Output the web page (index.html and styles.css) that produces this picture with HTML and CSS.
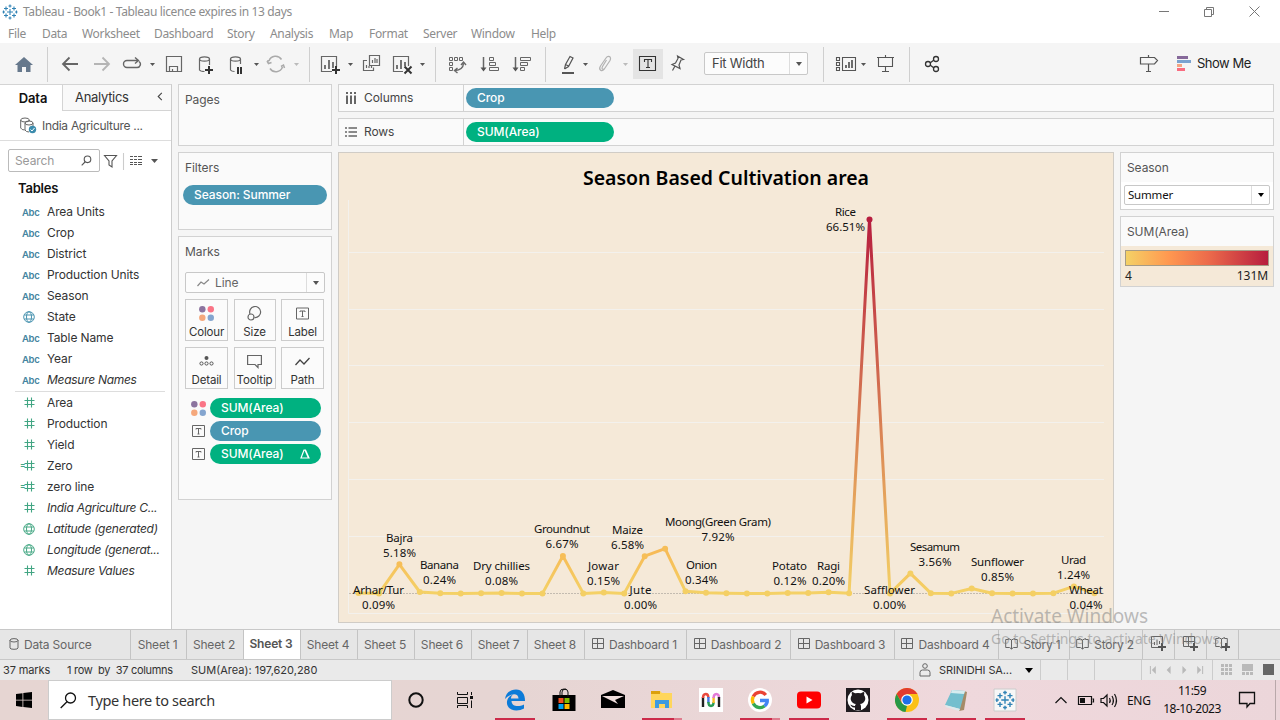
FILE: index.html
```html
<!DOCTYPE html>
<html lang="en">
<head>
<meta charset="utf-8">
<title>Tableau - Book1</title>
<link rel="stylesheet" href="styles.css">
</head>
<body>
<svg class="defs" width="0" height="0">
  <symbol id="logo" viewBox="0 0 16 16"><path d="M8 5v6M5 8h6M4 2.500v4M2 4.500h4M12 2.500v4M10 4.500h4M4 9.500v4M2 11.500h4M12 9.500v4M10 11.500h4M8 .5v3M6.500 2h3M8 12.500v3M6.500 14h3M1.500 6.500v3M.5 8h2.500M14.500 6.500v3M13 8h2.500" stroke="#3183b5" stroke-width="1.100" fill="none"/></symbol>
  <symbol id="dots" viewBox="0 0 14 14"><circle cx="3.100" cy="3.100" r="3" fill="#8c749f"/><circle cx="11" cy="3.100" r="3" fill="#fa7486"/><circle cx="3.100" cy="11" r="3" fill="#f5a87c"/><circle cx="11" cy="11" r="3" fill="#84a5cf"/></symbol>
  <symbol id="tbox" viewBox="0 0 13 12"><path d="M.5.5h12v11H.5zM4 4.500V3.500h5v1M6.500 3.500v5.500M5.500 9h2" fill="none" stroke="#666"/></symbol>
  <symbol id="hash" viewBox="0 0 11 11"><path d="M3.500.5v10M7.500.5v10M.5 3.500h10M.5 7.500h10" fill="none" stroke="#42a583" stroke-width="1.100"/></symbol>
  <symbol id="globe" viewBox="0 0 12 12"><g fill="none" stroke="currentColor"><circle cx="6" cy="6" r="5.300"/><ellipse cx="6" cy="6" rx="2.500" ry="5.300"/><path d="M1.300 4h9.400M1.300 8h9.400"/></g></symbol>
  <symbol id="grid" viewBox="0 0 12 12"><path d="M.5.5h11v10H.5zM5.500.5v10M.5 5.500h11" fill="none" stroke="#666"/></symbol>
  <symbol id="book" viewBox="0 0 13 13"><path d="M6.500 3V12M6.500 3L3.500 1.500v1H.7v8h3.800l2 1.500 2-1.500h3.800v-8H9.500v-1z" fill="none" stroke="#666"/></symbol>
  <symbol id="plus" viewBox="0 0 8 8"><path d="M4 0v8M0 4h8" stroke="#555" stroke-width="2"/></symbol>
</svg>

<header class="titlebar">
  <svg class="app-logo" width="16" height="16"><use href="#logo"/></svg>
  <span class="app-title">Tableau - Book1 - Tableau licence expires in 13 days</span>
  <svg class="winbtns" width="110" height="22" viewBox="1155 0 110 22" fill="none" stroke="#777"><path d="M1159 10.500h10M1204.500 8.500h7v7h-7zM1206.500 8.500v-2h7v7h-2M1249.500 5.500l10 10M1259.500 5.500l-10 10"/></svg>
</header>
<nav class="menubar"><span class="m1">File</span><span class="m2">Data</span><span class="m3">Worksheet</span><span class="m4">Dashboard</span><span class="m5">Story</span><span class="m6">Analysis</span><span class="m7">Map</span><span class="m8">Format</span><span class="m9">Server</span><span class="m10">Window</span><span class="m11">Help</span></nav>

<div class="toolbar">
  <svg width="47" height="41" viewBox="0 43 47 41"><path d="M15 65l9-8 9 8h-2.500v7h-4.500v-5h-4v5h-4.500v-7z" fill="#66788c"/></svg>
  <svg class="sep" width="262" height="41" viewBox="47 43 262 41" fill="none" stroke="#666" stroke-width="1.200">
    <path d="M78 64H63M69.500 57.500L63 64l6.500 6.500" stroke-width="1.800"/>
    <path d="M94 64h15M102.500 57.500L109 64l-6.500 6.500" stroke="#b5b5b5" stroke-width="1.800"/>
    <path d="M131 60.500h-4a3.500 3.500 0 0 0 0 7h10a3.300 3.300 0 0 0 2-6M129 60.500h9M135 57.500l3.500 3-3.500 3" stroke-width="1.400"/>
    <path d="M150 63h5l-2.500 3z" fill="#555" stroke="none"/>
    <path d="M166.500 56.500h15v15h-15zM169.500 71.500v-5h8v5M172.500 71.500v-2.500"/>
    <path d="M199.500 59v11q1 1.500 5 1.500M209.500 59v6"/><ellipse cx="204.500" cy="59" rx="5" ry="2.200"/><path d="M209 66v8M205 70h8" stroke="#333" stroke-width="2"/>
    <path d="M230.500 59v11q1 1.500 4 1.500M240.500 59v5"/><ellipse cx="235.500" cy="59" rx="5" ry="2.200"/><path d="M238 67v7M241 67v7" stroke="#333" stroke-width="2"/>
    <path d="M254 63h5l-2.500 3z" fill="#555" stroke="none"/>
    <path d="M269 61a7 7 0 0 1 12.500-1.500M282.500 67a7 7 0 0 1-12.500 1.500M268 63v-3M267 61l1.500 2.500 3-1M281 66.500l2.500-1.500 1 3" stroke="#aaa" stroke-width="1.500"/>
    <path d="M294 63h5l-2.500 3z" fill="#bbb" stroke="none"/>
  </svg>
  <svg class="sep" width="126" height="41" viewBox="309 43 126 41" fill="none" stroke="#666" stroke-width="1.200">
    <path d="M332 71.500h-10.500v-15h15V67"/><path d="M325 69v-4M329 69v-9M333 68v-6" stroke-width="1.800"/><path d="M336 66v8M332 70h8" stroke="#333" stroke-width="2"/>
    <path d="M348 63h5l-2.500 3z" fill="#555" stroke="none"/>
    <path d="M369.500 55.500h10v10h-10zM367 60.500h-3.500v10h10v-3M372.500 63v-3M375 63v-5M377 63v-4M366.500 68v-3M369 68v-2M371.500 68v-2"/>
    <path d="M403 71.500h-9.500v-15h15V66"/><path d="M397 69v-4M401 69v-9M405 66v-4" stroke-width="1.800"/><path d="M404.500 66.500l7 7M411.500 66.500l-7 7" stroke="#333" stroke-width="2"/>
    <path d="M420 63h5l-2.500 3z" fill="#555" stroke="none"/>
  </svg>
  <svg class="sep" width="110" height="41" viewBox="435 43 110 41" fill="none" stroke="#666" stroke-width="1">
    <path d="M449.500 57.500h3v3h-3zM454.500 57.500h3v3h-3zM459.500 57.500h3v3h-3zM449.500 62.500h3v3h-3zM449.500 67.500h3v3h-3z"/><path d="M455 70.500q8-.5 8.500-7M457.500 68l-3 2.500 3 2.500M461 65l2.500-3 2.500 3" stroke-width="1.400"/>
    <path d="M483.500 57v13" stroke-width="1.500"/><path d="M480.500 67.500h6l-3 4z" fill="#555" stroke="none"/><path d="M489.500 57.500h4v3h-4zM489.500 62.500h6v3h-6zM489.500 67.500h9v3h-9z"/>
    <path d="M515.500 57v13" stroke-width="1.500"/><path d="M512.500 67.500h6l-3 4z" fill="#555" stroke="none"/><path d="M520.500 57.500h10v3h-10zM520.500 62.500h7v3h-7zM520.500 67.500h4v3h-4z"/>
  </svg>
  <div class="edit-tools">
    <svg class="sep" width="88" height="41" viewBox="545 43 88 41" fill="none" stroke="#555" stroke-width="1.200">
      <path d="M564.500 69l1-4.500 4.500-8 3 1.500-4.500 8.500-4 2.500M565.500 64.500l3 1.500"/><path d="M562 73h12" stroke-width="2"/><path d="M583 63h5l-2.500 3z" fill="#555" stroke="none"/>
      <path d="M606.500 60l-4 6.500c-1.500 3 1 4 2.500 1.500l5-7.500c2-4-2-5.500-4-2.500l-5.500 8c-2.500 4 1.500 6 3.500 3.500l6-9" stroke="#b2b2b2"/><path d="M623 63h5l-2.500 3z" fill="#bbb" stroke="none"/>
    </svg>
    <svg class="t-active" width="30" height="30" viewBox="633 49 30 30" fill="none" stroke="#333" stroke-width="1.100"><path d="M639.500 56.500h16v14h-16zM644.500 62v-2.500h7V62M648 59.500v8M646 67.500h4"/></svg>
    <svg class="pin" width="41" height="41" viewBox="663 43 41 41" fill="none" stroke="#555" stroke-width="1.200"><path d="M677.500 56l6 3.500-2.500.5-2 5 1 3.500-8-4 3.500-1.500 2.500-4.500zM675 66l-2.500 4.500"/></svg>
    <div class="select fit"><span>Fit Width</span><i class="caret-cell"><b class="caret"></b></i></div>
  </div>
  <svg class="sep" width="86" height="41" viewBox="823 43 86 41" fill="none" stroke="#555" stroke-width="1.100">
    <path d="M836.500 57.500h3v3h-3zM836.500 62.500h3v3h-3zM836.500 67.500h3v3h-3zM842.500 57.500h13v13h-13z"/><path d="M846 68v-3M849 68v-6M852 68v-8" stroke-width="1.700"/><path d="M861 63h5l-2.500 3z" fill="#555" stroke="none"/><path d="M877 57.500h17M878.500 57.500v9h14v-9M885.500 55v2M885.500 67v4M882 71.500h7"/>
  </svg>
  <svg class="sep" width="220" height="41" viewBox="909 43 220 41" fill="none" stroke="#333" stroke-width="1.300"><circle cx="928" cy="64" r="2.500"/><circle cx="936" cy="59" r="2.500"/><circle cx="936" cy="69" r="2.500"/><path d="M930 63l4-3M930 65l4 3"/></svg>
  <svg class="sign" width="68" height="41" viewBox="1129 43 68 41" fill="none" stroke="#555" stroke-width="1.200"><path d="M1140.500 57.500h14l3 3-3 3.500h-14zM1148.500 55v2.500M1148.500 64v8M1146 71.500h5"/><path d="M1177 57.500h11" stroke="#86699a" stroke-width="3"/><path d="M1177 61.500h14" stroke="#7ba2cf" stroke-width="3"/><path d="M1177 65.500h5" stroke="#f4a582" stroke-width="3"/><path d="M1177 69.500h8" stroke="#f96c80" stroke-width="3"/></svg>
  <span class="showme">Show Me</span>
</div>

<main class="workspace">
  <aside class="data-pane">
    <div class="pane-tabs"><b>Data</b><span class="analytics">Analytics</span><svg width="8" height="10" viewBox="0 0 8 10"><path d="M6 1L2 5l4 4" fill="none" stroke="#444" stroke-width="1.200"/></svg></div>
    <div class="source"><svg width="17" height="17" viewBox="0 0 17 17" fill="none" stroke="#666"><ellipse cx="5" cy="3" rx="4.300" ry="2"/><path d="M.7 3v8q1 2 4 2M9.300 3v1"/><ellipse cx="9" cy="6" rx="4" ry="2"/><path d="M5 6v7q1 2 4 2M13 6v3"/><circle cx="12.500" cy="12.500" r="3.700" fill="#3c8cad" stroke="none"/><path d="M10.500 12.500l1.500 1.500 2.500-3" stroke="#fff"/></svg><span>India Agriculture ...</span></div>
    <div class="search-row"><div class="search"><span>Search</span><svg width="11" height="11" viewBox="0 0 11 11" fill="none" stroke="#555" stroke-width="1.100"><circle cx="6.500" cy="4.300" r="3.300"/><path d="M4 7L.7 10.300"/></svg></div>
      <svg width="60" height="20" viewBox="101 150 60 20" fill="none" stroke="#555" stroke-width="1.100"><path d="M104.500 154.500h12l-4.500 5.500v6l-3-2v-4z"/><path d="M123.500 152v17" stroke="#ccc"/><path d="M130 155.500h3m1 0h3m1 0h4M130 158.500h3m1 0h3m1 0h4M130 161.500h3m1 0h3m1 0h4M130 163.500h3m1 0h3m1 0h4"/><path d="M151 158h7l-3.500 4z" fill="#555" stroke="none"/></svg></div>
    <h2>Tables</h2>
    <ul class="fields">
      <li><em>Abc</em>Area Units</li><li><em>Abc</em>Crop</li><li><em>Abc</em>District</li><li><em>Abc</em>Production Units</li><li><em>Abc</em>Season</li>
      <li><svg class="gl blue"><use href="#globe"/></svg>State</li><li><em>Abc</em>Table Name</li><li><em>Abc</em>Year</li><li class="it"><em>Abc</em><span>Measure Names</span></li>
    </ul>
    <ul class="fields measures">
      <li><svg class="ha"><use href="#hash"/></svg>Area</li><li><svg class="ha"><use href="#hash"/></svg>Production</li><li><svg class="ha"><use href="#hash"/></svg>Yield</li>
      <li><small>=</small><svg class="ha"><use href="#hash"/></svg>Zero</li><li><small>=</small><svg class="ha"><use href="#hash"/></svg>zero line</li>
      <li class="it"><svg class="ha"><use href="#hash"/></svg><span>India Agriculture C...</span></li><li class="it"><svg class="gl green"><use href="#globe"/></svg><span>Latitude (generated)</span></li><li class="it"><svg class="gl green"><use href="#globe"/></svg><span>Longitude (generat...</span></li><li class="it"><svg class="ha"><use href="#hash"/></svg><span>Measure Values</span></li>
    </ul>
  </aside>

  <section class="cards">
    <div class="card pages"><h3>Pages</h3></div>
    <div class="card filters"><h3>Filters</h3><div class="pill blue-pill">Season: Summer</div></div>
    <div class="card marks"><h3>Marks</h3>
      <div class="select mark-type"><svg width="13" height="8" viewBox="0 0 13 8"><path d="M.5 7L4 3l3 2 5-4.500" fill="none" stroke="#888" stroke-width="1.200"/></svg><span>Line</span><i class="caret-cell"><b class="caret"></b></i></div>
      <div class="mark-grid">
        <div><svg width="15" height="15"><use href="#dots"/></svg>Colour</div>
        <div><svg width="15" height="15" viewBox="0 0 15 15" fill="none" stroke="#666" stroke-width="1.200"><path d="M3 8a5.500 5.500 0 1 1 4.500 3.500"/><circle cx="4" cy="11" r="3"/></svg>Size</div>
        <div><svg width="13" height="15"><use href="#tbox"/></svg>Label</div>
        <div><svg width="15" height="15" viewBox="0 0 15 15" fill="none" stroke="#555"><circle cx="7.500" cy="4" r="2" fill="#555" stroke="none"/><circle cx="2.500" cy="9.500" r="1.600"/><circle cx="7.500" cy="9.500" r="1.600"/><circle cx="12.500" cy="9.500" r="1.600"/></svg>Detail</div>
        <div><svg width="15" height="15" viewBox="0 0 15 15"><path d="M.6 1.500h13.800v9H11v3L8 10.500H.6z" fill="none" stroke="#666" stroke-width="1.200"/></svg>Tooltip</div>
        <div><svg width="15" height="15" viewBox="0 0 15 15"><path d="M.5 11l4.500-5 4 4 5.500-6" fill="none" stroke="#444" stroke-width="1.300"/></svg>Path</div>
      </div>
      <div class="mark-row"><svg width="15" height="15"><use href="#dots"/></svg><div class="pill green-pill">SUM(Area)</div></div>
      <div class="mark-row"><svg width="13" height="12"><use href="#tbox"/></svg><div class="pill blue-pill">Crop</div></div>
      <div class="mark-row"><svg width="13" height="12"><use href="#tbox"/></svg><div class="pill green-pill">SUM(Area)<svg class="delta" width="10" height="10" viewBox="0 0 10 10"><path d="M1 9L4 1h1.500L9 9zM5 1l3.500 8" fill="none" stroke="#fff" stroke-width="1.200"/></svg></div></div>
    </div>
  </section>

  <section class="canvas">
    <div class="shelf"><div class="shelf-name"><svg width="12" height="12" viewBox="0 0 12 12" stroke="#666" stroke-width="2"><path d="M2 0v2M6 0v2M10 0v2M2 3.500V12M6 3.500V12M10 3.500V12"/></svg><span>Columns</span></div><div class="pill blue-pill">Crop</div></div>
    <div class="shelf"><div class="shelf-name"><svg width="12" height="12" viewBox="0 0 12 12" stroke="#666" stroke-width="1.700"><path d="M0 2h2M3.500 2H12M0 6h2M3.500 6H12M0 10h2M3.500 10H12"/></svg><span>Rows</span></div><div class="pill green-pill">SUM(Area)</div></div>
    <div class="view-row">
      <figure class="viz">
        <svg width="774" height="469" viewBox="339 153 774 469">
          <defs>
            <linearGradient id="low" gradientUnits="userSpaceOnUse" x1="0" y1="593" x2="0" y2="549"><stop offset="0" stop-color="#f4d166"/><stop offset="1" stop-color="#f7b955"/></linearGradient>
            <linearGradient id="peak" gradientUnits="userSpaceOnUse" x1="0" y1="593" x2="0" y2="219"><stop offset="0" stop-color="#f4d166"/><stop offset="1" stop-color="#b71d3e"/></linearGradient>
          </defs>
          <text class="chart-title" x="583" y="185" textLength="286" lengthAdjust="spacingAndGlyphs">Season Based Cultivation area</text>
          <path d="M349 252.500h755M349 309.500h755M349 365.500h755M349 422.500h755M349 479.500h755M349 536.500h755M348.500 200v413.500H1104" fill="none" stroke="#f3f1ed"/>
          <path d="M349 593.500h755" stroke="#c3bbb0" stroke-dasharray="2 1"/>
          <g fill="none" stroke-width="3" stroke-linejoin="round">
            <path stroke="url(#low)" d="M358.500 593.100L379 593.400 399.400 564.300 419.800 592 440.300 593.200 460.700 593.400 481.100 593.300 501.600 593 522 593.400 542.500 593.400 562.900 556 583.300 593.400 603.800 592.600 624.200 593.400 644.700 556.200 665.100 548.700 685.500 591.300 706 592.700 726.400 593.200 746.900 593.400 767.300 593.400 787.700 593 808.200 592.900 828.600 592.300 849.100 593.200"/>
            <path stroke="url(#peak)" d="M849.100 593.200L869.500 219.500 890 593.400"/>
            <path stroke="url(#low)" d="M890 593.400L910.400 573.400 930.800 593.200 951.300 593.400 971.700 588.500 992.100 593.200 1012.600 593.400 1033 593.400 1053.400 593.200 1073.900 586.400 1094.300 593.200"/>
          </g>
          <path fill="none" stroke="#f4cf64" stroke-width="6" stroke-linecap="round" d="M358.500 593.100h0M379 593.400h0M419.800 592h0M440.300 593.200h0M460.700 593.400h0M481.100 593.300h0M501.600 593h0M522 593.400h0M542.500 593.400h0M583.300 593.400h0M603.800 592.600h0M624.200 593.400h0M685.500 591.300h0M706 592.700h0M726.400 593.200h0M746.900 593.400h0M767.300 593.400h0M787.700 593h0M808.200 592.900h0M828.600 592.300h0M849.100 593.200h0M890 593.400h0M930.800 593.200h0M951.300 593.400h0M971.700 588.500h0M992.100 593.200h0M1012.600 593.400h0M1033 593.400h0M1053.400 593.200h0M1073.900 586.400h0M1094.300 593.200h0M910.400 573.400h0"/>
          <path fill="none" stroke="#f6be58" stroke-width="6" stroke-linecap="round" d="M399.400 564.300h0M562.900 556h0M644.700 556.200h0M665.100 548.700h0"/>
          <circle cx="869.500" cy="219.500" r="3" fill="#b71d3e"/>
          <g class="labels">
            <text x="378.500" y="594" textLength="51">Arhar/Tur</text><text x="378.500" y="609" textLength="33">0.09%</text>
            <text x="399.500" y="542" textLength="27">Bajra</text><text x="399.500" y="557" textLength="33">5.18%</text>
            <text x="439.500" y="569" textLength="39">Banana</text><text x="439.500" y="584" textLength="33">0.24%</text>
            <text x="501.500" y="570" textLength="57">Dry chillies</text><text x="501.500" y="585" textLength="33">0.08%</text>
            <text x="562" y="533" textLength="56">Groundnut</text><text x="562" y="548" textLength="33">6.67%</text>
            <text x="603.500" y="570" textLength="31">Jowar</text><text x="603.500" y="585" textLength="33">0.15%</text>
            <text x="627.500" y="534" textLength="31">Maize</text><text x="627.500" y="549" textLength="33">6.58%</text>
            <text x="640.500" y="594" textLength="22">Jute</text><text x="640.500" y="609" textLength="33">0.00%</text>
            <text x="718" y="526" textLength="106">Moong(Green Gram)</text><text x="718" y="541" textLength="33">7.92%</text>
            <text x="701.500" y="569" textLength="31">Onion</text><text x="701.500" y="584" textLength="33">0.34%</text>
            <text x="789.500" y="570" textLength="35">Potato</text><text x="790" y="585" textLength="33">0.12%</text>
            <text x="828.500" y="570" textLength="23">Ragi</text><text x="828.500" y="585" textLength="33">0.20%</text>
            <text x="845.500" y="216" textLength="21">Rice</text><text x="845.500" y="231" textLength="39">66.51%</text>
            <text x="889.500" y="594" textLength="51">Safflower</text><text x="889.500" y="609" textLength="33">0.00%</text>
            <text x="935" y="551" textLength="50">Sesamum</text><text x="935" y="566" textLength="33">3.56%</text>
            <text x="997.500" y="566" textLength="53">Sunflower</text><text x="997.500" y="581" textLength="33">0.85%</text>
            <text x="1073.500" y="564" textLength="25">Urad</text><text x="1073.500" y="579" textLength="33">1.24%</text>
            <text x="1086" y="594" textLength="34">Wheat</text><text x="1086" y="609" textLength="33">0.04%</text>
          </g>
        </svg>
      </figure>
      <div class="legends">
        <div class="card season"><h3>Season</h3><div class="season-body"><div class="select"><span>Summer</span><i class="caret-cell"><b class="caret"></b></i></div></div></div>
        <div class="card ramp-card"><h3>SUM(Area)</h3><div class="ramp-body"><div class="ramp"></div><div class="ramp-ends"><span>4</span><span>131M</span></div></div></div>
      </div>
    </div>
  </section>
</main>

<nav class="sheet-tabs">
  <div class="tab w131"><svg width="10" height="12" viewBox="0 0 10 12" fill="none" stroke="#666"><path d="M1 2v8q0 1.300 4 1.300T9 10V2"/><ellipse cx="5" cy="2.300" rx="4" ry="1.700"/></svg><span>Data Source</span></div>
  <div class="tab w56">Sheet 1</div><div class="tab w57">Sheet 2</div><div class="tab w57 active">Sheet 3</div><div class="tab w57">Sheet 4</div><div class="tab w57">Sheet 5</div><div class="tab w57">Sheet 6</div><div class="tab w56">Sheet 7</div><div class="tab w57">Sheet 8</div>
  <div class="tab w102"><svg width="12" height="12"><use href="#grid"/></svg><span>Dashboard 1</span></div><div class="tab w104"><svg width="12" height="12"><use href="#grid"/></svg><span>Dashboard 2</span></div><div class="tab w104"><svg width="12" height="12"><use href="#grid"/></svg><span>Dashboard 3</span></div><div class="tab w104"><svg width="12" height="12"><use href="#grid"/></svg><span>Dashboard 4</span></div>
  <div class="tab w71"><svg width="13" height="13"><use href="#book"/></svg><span>Story 1</span></div><div class="tab w73"><svg width="13" height="13"><use href="#book"/></svg><span>Story 2</span></div>
  <div class="tab w32"><svg width="16" height="16" fill="none" stroke="#666"><path d="M8 11.500H.5V.5h11V7M3.500 9V6M6 9V3.500M8.500 8V5"/><use href="#plus" x="7" y="7" width="8" height="8"/></svg></div>
  <div class="tab w32"><svg width="16" height="16"><use href="#grid" width="12" height="12"/><use href="#plus" x="7" y="7" width="8" height="8"/></svg></div>
  <div class="tab w32"><svg width="16" height="16"><use href="#book" width="13" height="13"/><use href="#plus" x="7" y="7" width="8" height="8"/></svg></div>
</nav>
<div class="statusbar">
  <span class="s1">37 marks</span><span class="s2">1 row&nbsp; by&nbsp; 37 columns</span><span class="s3">SUM(Area): 197,620,280</span>
  <div class="user"><svg width="12" height="14" viewBox="0 0 12 14" fill="none" stroke="#666"><circle cx="6" cy="3" r="2.300"/><path d="M1 13V9.500q0-2.500 2.500-2.500h5Q11 7 11 9.500V13z"/></svg><span>SRINIDHI SA...</span><b class="caret big"></b></div>
  <i class="c27"></i><i class="c27"></i><i class="c47"></i>
  <svg class="navs" width="71" height="20" viewBox="1142 660 71 20" fill="#b9b9b9"><path d="M1150 666h1v8h-1zM1156 666v8l-4-4zM1171 666v8l-4-4zM1183 666v8l4-4zM1198 666v8l4-4zM1203 666h1v8h-1z"/></svg>
  <svg width="67" height="20" viewBox="1213 660 67 20" fill="#b9b9b9"><path d="M1221 664h3v3h-3zm4 0h3v3h-3zm4 0h3v3h-3zm-8 4h3v3h-3zm4 0h3v3h-3zm4 0h3v3h-3zm-8 4h3v3h-3zm4 0h3v3h-3zm4 0h3v3h-3zM1242 664h11v7h-11zM1242 672h3v3h-3zm4 0h3v3h-3zm4 0h3v3h-3z"/><path d="M1263 664h11v11h-11z" fill="#666"/></svg>
</div>

<footer class="taskbar">
  <div class="start"><svg width="16" height="16" viewBox="0 0 16 16"><path d="M0 2l6.500-.8v6.500H0zM7.300 1L16 0v7.700H7.300zM0 8.500h6.500V15L0 14.100zM7.300 8.500H16V16l-8.700-1z"/></svg></div>
  <div class="os-search"><svg width="17" height="17" viewBox="0 0 17 17" fill="none" stroke="#111" stroke-width="1.300"><circle cx="10.500" cy="6" r="5"/><path d="M7 9.700L.7 16"/></svg><span>Type here to search</span></div>
  <div class="slot"><svg class="nudge" width="24" height="24"><circle cx="12" cy="12" r="6.700" fill="none" stroke="#111" stroke-width="2"/></svg></div>
  <div class="slot"><svg class="nudge" width="24" height="24" viewBox="0 0 24 24" fill="none" stroke="#111"><path d="M4.500 4v2.500h10V4M4.500 9.500h10v6h-10zM4.500 20v-2.500h10V20M18.500 4v3M18.500 12.500V20"/><path d="M17 8h3v3h-3z" fill="#111" stroke="none"/></svg></div>
  <div class="slot run"><svg width="24" height="24" viewBox="0 0 24 24"><path d="M2 11C3 4.500 8 1.500 13 1.500c6 0 9 4.500 9 11.500H8.500c.3 6 7.500 6 12.500 3.500v4c-7 4-18 2-17-7 .4-3.500 3-6 6-7-1.500 1.500-2 2.500-2 4h7.500c0-6-8-5.500-13.500.5z" fill="#0c7bd8"/></svg></div>
  <div class="slot"><svg width="24" height="24" viewBox="0 0 24 24"><path d="M.5 7h23v16H.5z"/><path d="M8 9V4q0-3 4-3t4 3v5M10 7V4q0-3 4-3" fill="none" stroke="#111"/><path d="M6.500 10h5v5h-5z" fill="#f25022"/><path d="M12.500 10h5v5h-5z" fill="#7fba00"/><path d="M6.500 16h5v5h-5z" fill="#00a4ef"/><path d="M12.500 16h5v5h-5z" fill="#ffb900"/></svg></div>
  <div class="slot"><svg width="24" height="24" viewBox="0 0 24 24"><path d="M0 7l12-5 12 5v13H0z"/><path d="M1 8h22l-9 4 3 4z" fill="#f1dfdd"/></svg></div>
  <div class="slot run split"><svg width="24" height="24" viewBox="0 0 24 24"><path d="M1 3h9l2 2h10v15H1z" fill="#ffd65c"/><path d="M1 3h9v3H1z" fill="#dca10b"/><path d="M5 12h14v8h-4v-4H9v4H5z" fill="#3d9be0"/></svg></div>
  <div class="slot"><svg width="24" height="24" viewBox="0 0 24 24"><path d="M0 0h24v24H0z" fill="#fff"/><g fill="none" stroke-width="2.400"><path d="M4 19V9" stroke="#222"/><path d="M4 10q0-4 2.700-4T9.400 10" stroke="#e94b40"/><path d="M9.400 9v6" stroke="#4779e8"/><path d="M9.400 14q0 4 2.600 4t2.600-4" stroke="#2b9c55"/><path d="M14.600 15V9" stroke="#f8bd25"/><path d="M14.600 10q0-4 2.700-4T20 10" stroke="#e37bd7"/><path d="M20 9v10" stroke="#222"/></g></svg></div>
  <div class="slot run split"><svg width="24" height="24" viewBox="0 0 24 24"><circle cx="12" cy="12" r="12" fill="#fff"/><g fill="none" stroke-width="3.300"><path d="M17.800 7A7.400 7.400 0 0 0 5.300 8.500" stroke="#ea4335"/><path d="M5.300 8.500a7.400 7.400 0 0 0 0 7" stroke="#fbbc05"/><path d="M5.300 15.500A7.400 7.400 0 0 0 16.500 18" stroke="#34a853"/><path d="M16.500 18q3-2.500 2.800-5.500H12" stroke="#4285f4"/></g></svg></div>
  <div class="slot run"><svg width="24" height="24" viewBox="0 0 24 24"><rect y="3.500" width="24" height="17" rx="4" fill="#f00"/><path d="M9.500 8.500l6 3.500-6 3.500z" fill="#fff"/></svg></div>
  <div class="slot"><svg width="24" height="24" viewBox="0 0 24 24"><path d="M0 0h24v24H0z" fill="#201c20"/><circle cx="12" cy="12" r="10.500" fill="#fff"/><path d="M6 7c-.5-1-.3-3 .2-3 1 0 2.200.8 3 1.300q2.800-.7 5.600 0c.8-.5 2-1.300 3-1.300.5 0 .7 2 .2 3 3 4 .5 8.500-4 9 .8.700 1 1.500 1 3V22H9v-2.500c-3 .6-3.800-2-4.800-2.700 2-.3 2.500 1.700 4.800 1.200q0-1.300 1-2C5.500 15.500 3 11 6 7z" fill="#201c20"/></svg></div>
  <div class="slot run"><svg width="24" height="24" viewBox="0 0 24 24"><circle cx="12" cy="12" r="12" fill="#fbc116"/><path d="M1.600 6a12 12 0 0 1 20.800 0H12L7 15z" fill="#e23b2e"/><path d="M1.600 6l5.200 9 5.200 3-1.500 6A12 12 0 0 1 1.600 6z" fill="#279847"/><circle cx="12" cy="12" r="5.800" fill="#fff"/><circle cx="12" cy="12" r="4.600" fill="#1d70e8"/></svg></div>
  <div class="slot run"><svg width="24" height="24" viewBox="0 0 24 24"><path d="M20 3l3 1-3 18-5 1z" fill="#a58b68"/><path d="M8 2l13 1-5 18-15-4z" fill="#73bfce"/><path d="M8 2l13 1-1 3L7 5z" fill="#d5ecef"/><path d="M1 17l15 4-1 2-13-4z" fill="#dcebed"/></svg></div>
  <div class="slot run"><svg width="24" height="24" viewBox="0 0 24 24"><path d="M1 1h22v22H1z" fill="#f7f7f7" stroke="#ccc"/><use href="#logo" x="2" y="2" width="20" height="20"/></svg></div>
  <svg class="tray" width="92" height="40" viewBox="1030 680 92 40" fill="none" stroke="#111" stroke-width="1.200"><path d="M1055.500 703l5.500-5.500 5.500 5.500M1078.500 696.500h13v8h-13zM1092.500 699h1v3h-1M1101 698.500h2.500l3.500-3.500v11l-3.500-3.500h-2.500zM1109.500 698q1.500 2.500 0 5M1112 696q2.800 4.500 0 9M1114.500 694q4 6.500 0 13"/><path d="M1080 698h5v5h-5z" fill="#111" stroke="none"/></svg>
  <span class="lang">ENG</span>
  <div class="clock"><span class="time">11:59</span><span class="date">18-10-2023</span></div>
  <svg class="notif" width="54" height="40" viewBox="1226 680 54 40" fill="none" stroke="#111" stroke-width="1.300"><path d="M1239.500 692.500h15v11h-4.500l-3 3.500v-3.500h-7.500z"/><path d="M1275.500 680v40" stroke="#b9a8aa" stroke-width="1"/></svg>
</footer>
<div class="watermark"><div class="wm1">Activate Windows</div><div class="wm2">Go to Settings to activate Windows.</div></div>
</body>
</html>
```
FILE: styles.css
```css
* { box-sizing: border-box; }
body { margin: 0; width: 1280px; height: 720px; overflow: hidden; position: relative; background: #f5f5f5; font: 12px/15px Inter, sans-serif; letter-spacing: -.08px; color: #333; display: flex; flex-direction: column; }
svg { display: block; flex: none; }
.defs { display: none; }
h2, h3, ul, figure { margin: 0; padding: 0; font-weight: 400; }
.titlebar, .menubar { background: #fff; font-family: "Noto Sans", sans-serif; color: #8c8c8c; white-space: nowrap; }
.titlebar { height: 23px; display: flex; align-items: center; padding-left: 2px; font-size: 12px; }
.app-title { margin-left: 5px; letter-spacing: -.38px; }
.winbtns { margin-left: auto; margin-right: 15px; }
.menubar { height: 20px; display: flex; padding: 3px 0 0 8px; font-size: 12px; letter-spacing: -.32px; }
.m1 { width: 34px; } .m2 { width: 40px; } .m3 { width: 72px; } .m4 { width: 73px; } .m5 { width: 43px; } .m6 { width: 59px; } .m7 { width: 40px; } .m8 { width: 54px; } .m9 { width: 48px; } .m10 { width: 60px; }
.toolbar { height: 41px; flex: none; display: flex; align-items: center; background: #f5f5f5; }
.sep { background: linear-gradient(#cfcfcf, #cfcfcf) 0 4px / 1px 35px no-repeat; }
.edit-tools { display: flex; align-items: center; width: 278px; flex: none; }
.t-active { background: #e4e4e4; }
.select { display: flex; align-items: center; border: 1px solid #c8c8c8; border-radius: 2px; background: #fcfcfc; }
.caret-cell { margin-left: auto; width: 18px; align-self: stretch; border-left: 1px solid #ddd; display: flex; align-items: center; justify-content: center; }
.caret { width: 0; height: 0; border: 3.5px solid transparent; border-top: 4px solid #555; border-bottom: 0; }
.fit { width: 104px; height: 23px; padding-left: 7px; font-size: 13px; color: #444; letter-spacing: -.25px; }
.showme { font-size: 13px; color: #222; letter-spacing: -.5px; }

.workspace { height: 545px; flex: none; display: flex; }
.data-pane { width: 172px; flex: none; background: #fff; border-right: 1px solid #ccc; border-top: 1px solid #d4d4d4; white-space: nowrap; }
.pane-tabs { height: 26px; display: flex; align-items: center; }
.pane-tabs b { width: 62px; text-align: center; padding-left: 4px; font-size: 13px; font-weight: 600; color: #111; }
.analytics { flex: 1; height: 26px; padding: 5px 0 0 12px; font-size: 13px; letter-spacing: -.3px; border-left: 1px solid #d4d4d4; border-bottom: 1px solid #d4d4d4; background: #f9f9f9; }
.pane-tabs svg { width: 20px; height: 26px; padding: 7px 7px 9px 5px; border-bottom: 1px solid #d4d4d4; background: #f9f9f9; }
.source { height: 30px; display: flex; align-items: center; padding: 0 0 1px 20px; gap: 5px; color: #555; letter-spacing: -.3px; border-bottom: 1px solid #ddd; }
.search-row { display: flex; padding: 8px 0 0 8px; align-items: center; gap: 1px; }
.search { width: 92px; height: 23px; border: 1px solid #bbb; border-radius: 2px; display: flex; align-items: center; justify-content: space-between; padding: 0 7px 0 6px; color: #999; }
.data-pane h2 { font-size: 13px; line-height: 16px; font-weight: 600; letter-spacing: -.2px; color: #111; padding: 8px 0 5px 18px; }
.fields { list-style: none; }
.fields li { height: 21px; display: flex; align-items: center; padding-left: 47px; color: #333; letter-spacing: -.12px; }
.fields em { font: 600 9.5px/15px Inter, sans-serif; color: #44849f; width: 25px; margin-left: -25px; letter-spacing: -.35px; padding-top: 1px; }
.fields .gl { width: 12px; height: 12px; margin: 0 12px 0 -24px; }
.blue { color: #4a94b0; } .green { color: #48a986; }
.fields .ha { width: 11px; height: 11px; margin: 0 12px 0 -23px; }
.fields small { width: 5px; margin-left: -27px; margin-right: 22px; font-size: 8px; color: #42a583; font-weight: 700; }
.it span { font-style: italic; letter-spacing: -.28px; }
.measures { margin: 1px 6px 0 15px; border-top: 1px solid #ddd; }
.measures li { padding-left: 32px; }

.cards { width: 167px; flex: none; padding-left: 6px; display: flex; flex-direction: column; gap: 6px; }
.card { border: 1px solid #d2d2d2; background: #fafafa; }
.cards .card { width: 154px; }
.card h3 { font-size: 12px; line-height: 15px; padding: 7px 0 1px 6px; color: #555; }
.pages { height: 62px; } .filters { height: 78px; } .marks { height: 264px; }
.pill { height: 20px; border-radius: 10px; padding: 2px 0 0 11px; color: #fff; font-size: 12px; font-weight: 500; white-space: nowrap; }
.blue-pill { background: #4996b2; } .green-pill { background: #00b180; }
.filters .pill { margin: 9px 4px 0 4px; }
.mark-type { margin: 12px 6px 0; height: 21px; padding-left: 11px; gap: 5px; color: #666; }
.mark-grid { display: grid; grid-template-columns: 43px 42px 43px; gap: 6px; margin: 6px 0 0 6px; }
.mark-grid div { height: 42px; border: 1px solid #ccc; background: #fbfbfb; display: flex; flex-direction: column; align-items: center; justify-content: space-between; padding: 6px 0 0; font-size: 11.5px; letter-spacing: -.15px; }
.marks .mark-grid { column-gap: 5.5px; }
.mark-row { height: 20px; margin: 3px 0 0 12px; display: flex; align-items: center; }
.mark-grid + .mark-row { margin-top: 9px; }
.mark-row > svg { width: 15px; }
.mark-row .pill { width: 111px; margin-left: 4px; display: flex; align-items: center; padding: 0 0 1px 11px; }
.delta { margin-left: auto; margin-right: 11px; }

.canvas { display: flex; flex-direction: column; flex: none; width: 936px; margin-left: -1px; }
.shelf { height: 28px; border: 1px solid #d2d2d2; background: #fafafa; display: flex; align-items: center; margin-bottom: 6px; }
.shelf-name { width: 125px; height: 26px; border-right: 1px solid #d2d2d2; display: flex; align-items: center; gap: 7px; padding-left: 6px; color: #444; margin-right: 2px; }
.shelf-name span { padding-bottom: 1px; }
.shelf .pill { width: 148px; }
.view-row { display: flex; gap: 6px; }
.viz { width: 776px; height: 471px; border: 1px solid #d0ccc6; background: #f5e9d8; }
.chart-title { font: 600 20px "Noto Sans", sans-serif; letter-spacing: 0; fill: #000; }
.labels text { font: 11.5px "Noto Sans", sans-serif; letter-spacing: 0; fill: #111; text-anchor: middle; }
.legends { width: 154px; display: flex; flex-direction: column; gap: 6px; }
.season { height: 58px; } .ramp-card { height: 71px; }
.season h3, .ramp-card h3 { height: 29px; padding-top: 7px; }
.season-body { background: #fff; height: 27px; padding: 3px; }
.season-body .select { height: 20px; background: #fff; padding-left: 3px; color: #111; font: 11.5px/16px "Noto Sans", sans-serif; letter-spacing: -.2px; }
.season-body span { padding-bottom: 1px; }
.season .caret { border-top-color: #000; }
.ramp-body { background: #f5e9d8; height: 40px; padding: 4px; }
.ramp { height: 16px; border: 1px solid #a69b86; background: linear-gradient(90deg, #f4d166, #ff9850 30%, #ec6b4b 58%, #b71d3e); }
.ramp-ends { display: flex; justify-content: space-between; color: #222; font: 12px/19px "Noto Sans", sans-serif; padding-right: 1px; }

.sheet-tabs { height: 31px; flex: none; border-top: 1px solid #c8c8c8; border-bottom: 1px solid #c8c8c8; background: #e6e6e6; display: flex; color: #666; letter-spacing: -.18px; white-space: nowrap; }
.tab { flex: none; border-right: 1px solid #c4c4c4; display: flex; align-items: center; justify-content: center; gap: 5px; padding-right: 2px; }
.tab > svg { margin-bottom: 2px; }
.active { background: #fff; font-weight: 600; color: #555; padding-bottom: 2px; }
.w131 { width: 131px; justify-content: flex-start; padding-left: 9px; } .w56 { width: 56px; } .w57 { width: 57px; } .w102 { width: 102px; } .w104 { width: 104px; } .w71 { width: 71px; } .w73 { width: 73px; } .w32 { width: 32px; padding: 0; }
.statusbar { height: 20px; flex: none; background: #eaeaea; display: flex; align-items: center; font-size: 11px; letter-spacing: -.12px; white-space: nowrap; }
.s1 { width: 64px; padding-left: 3px; } .s2 { width: 127px; padding-left: 3px; letter-spacing: -.3px; } .s3 { width: 722px; letter-spacing: 0; }
.user { width: 128px; height: 20px; border: 1px solid #ccc; border-width: 0 1px; display: flex; align-items: center; padding-left: 5px; gap: 8px; }
.big { margin-left: 5px; border-width: 4px 4px 0; border-top: 5px solid #000; }
.c27 { width: 27px; height: 20px; border-right: 1px solid #ccc; } .c47 { width: 47px; height: 20px; border-right: 1px solid #ccc; }
.navs { border-right: 1px solid #ccc; }

.taskbar { height: 40px; flex: none; display: flex; align-items: center; background: linear-gradient(90deg, #e6d5d2, #e6d5d3 40%, #efd8dc 75%, #ecd6da); font-family: "Noto Sans", sans-serif; color: #111; }
.start { width: 48px; display: flex; justify-content: center; }
.os-search { width: 344px; height: 40px; background: #fff; border: 1px solid #ccc; display: flex; align-items: center; padding-left: 11px; gap: 11px; font-size: 14.5px; letter-spacing: -.35px; color: #333; }
.slot { width: 49px; height: 40px; display: flex; align-items: center; justify-content: center; flex: none; }
.nudge { margin-right: 2px; }
.run { background: linear-gradient(#cc2b4a, #cc2b4a) 5px 38px / 40px 2px no-repeat; }
.split { background: linear-gradient(90deg, #cc2b4a 32px, #df7c8e 32px) 5px 38px / 40px 2px no-repeat; }
.tray { margin-left: 1px; }
.lang { width: 34px; font-size: 12px; margin-left: 5px; letter-spacing: -.3px; flex: none; }
.clock { width: 62px; display: flex; flex-direction: column; align-items: center; font-size: 12px; line-height: 18px; letter-spacing: -.5px; white-space: nowrap; padding-bottom: 1px; }
.notif { margin-left: auto; }
.watermark { position: absolute; left: 991px; top: 604px; color: rgba(125,125,125,.5); font-family: "Noto Sans", sans-serif; letter-spacing: 0; white-space: nowrap; }
.wm1 { font-size: 19px; line-height: 25px; }
.wm2 { font-size: 14px; line-height: 19px; }
```
